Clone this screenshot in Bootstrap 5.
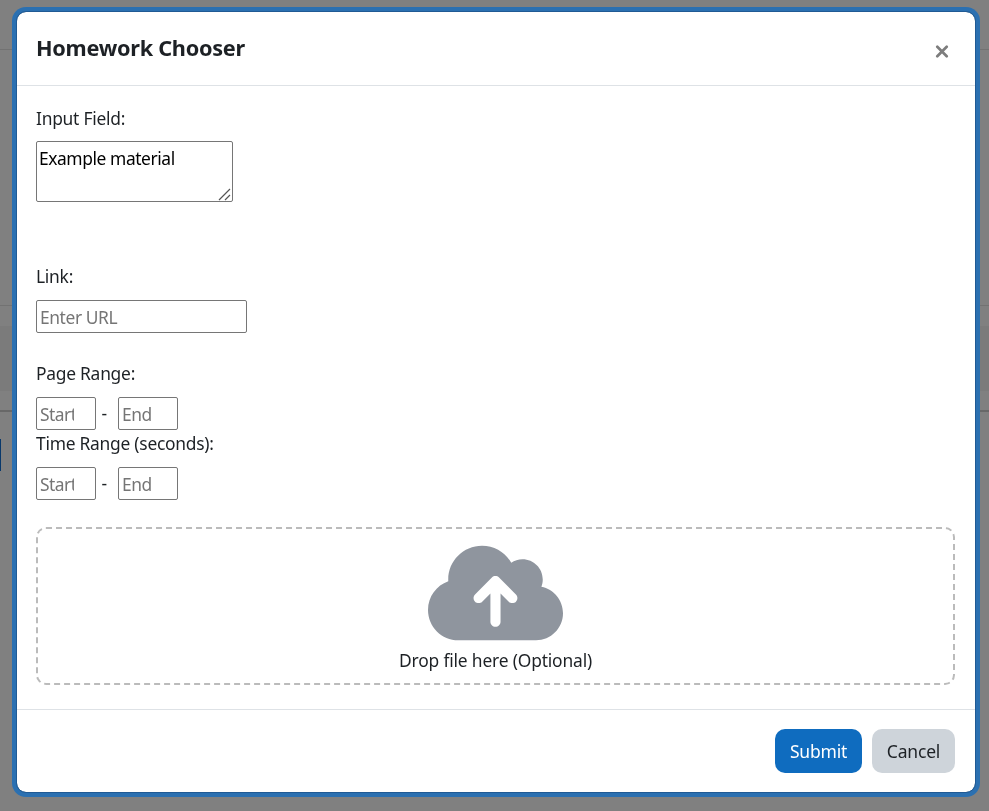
<!DOCTYPE html>
<html lang="en">
<head>
<meta charset="utf-8">
<meta name="viewport" content="width=device-width, initial-scale=1">
<title>Homework Chooser</title>
<link href="https://cdn.jsdelivr.net/npm/bootstrap@5.3.0/dist/css/bootstrap.min.css" rel="stylesheet">
<style>
  body { font-family: "Noto Sans", "Open Sans", sans-serif; font-size: 17.4px; line-height: 27px; color: #1d2125; background: #808080; height: 811px; overflow: hidden; letter-spacing: -.25px; }
  .page-behind { height: 811px; }
  .strip-top { height: 50px; border-bottom: 1px solid #727272; }
  .strip-main { height: 256px; border-bottom: 1px solid #727272; }
  .strip-gap { height: 20px; }
  .strip-band { height: 65px; background: #7b7b7b; }
  .strip-foot { height: 21px; border-bottom: 2px solid #686868; }
  .edge-button { width: 1px; height: 32px; margin-top: 27px; background: #08386b; }
  .chooser-dialog { max-width: 960px; width: 960px; margin: 11px 0 0 16px; }
  .chooser-box { height: 782px; border: 1px solid #205a94; border-radius: 10px; box-shadow: 0 0 0 4px #2b70b1; color: inherit; }
  .chooser-head { height: 74px; padding: 0 20px 0 19px; border-color: #dee2e6; }
  .chooser-title { font-size: 21.7px; font-weight: 700; line-height: 30px; letter-spacing: -.28px; padding-bottom: 2px; }
  .close-icon { width: 14px; height: 14px; margin: 5px 6px 0 0; }
  .chooser-body { padding: 20px 20px 0 19px; }
  .chooser-body label { display: block; height: 27px; white-space: nowrap; }
  .chooser-body label.first-label { line-height: 25px; }
  .plain { display: block; border: 1px solid #767676; border-radius: 2px; background: #fff; color: #000; outline: 0; letter-spacing: -.25px; }
  .plain::placeholder { color: #757575; opacity: 1; }
  .note-wrap { width: 197px; margin: 8px 0 61px; }
  .note { width: 197px; height: 61px; padding: 3px 2px; line-height: 27px; letter-spacing: -.42px; resize: none; overflow: hidden; }
  .grip { right: 2px; bottom: 1px; width: 13px; height: 13px; }
  .line-input { height: 33px; padding: 1px 3px; margin-top: 10px; }
  .url { width: 211px; margin-bottom: 27px; letter-spacing: -.4px; }
  .range { width: 60px; padding-right: 21px; letter-spacing: -.5px; }
  .dash { width: 22px; padding-left: 5.5px; margin-top: 10px; }
  .drop-zone { height: 158px; margin-top: 27px; border: 2px dashed #bbb; border-radius: 10px; padding-top: 9.5px; letter-spacing: -.17px; }
  .drop-zone svg { width: 135px; height: 108px; }
  .chooser-foot { height: 83px; padding: 0 20px 0 19px; gap: 10px; border-color: #dee2e6; }
  .chooser-foot > .btn { margin: 0; height: 44px; padding: 0; border: 0; border-radius: 10px; font-size: 17.5px; letter-spacing: -.2px; }
  .btn-send { width: 87px; background: #0f6cbf; color: #fff; }
  .btn-dismiss { width: 83px; background: #ced4da; color: #1d2125; }
</style>
<script src="https://cdn.jsdelivr.net/npm/bootstrap@5.3.0/dist/js/bootstrap.bundle.min.js"></script>
</head>
<body>
<div class="page-behind" aria-hidden="true">
  <div class="strip-top"></div><div class="strip-main"></div><div class="strip-gap"></div>
  <div class="strip-band"></div><div class="strip-foot"></div><div class="edge-button"></div>
</div>
<div class="modal d-block overflow-hidden" role="dialog" aria-labelledby="chooserTitle">
  <div class="modal-dialog chooser-dialog">
    <div class="modal-content chooser-box">
      <div class="modal-header chooser-head">
        <h5 class="modal-title chooser-title" id="chooserTitle">Homework Chooser</h5>
        <button type="button" class="btn p-0 border-0 d-flex" aria-label="Close">
          <svg class="close-icon" viewBox="0 0 14 14" fill="none" stroke="#7d7d7d" stroke-width="2.7" stroke-linecap="round"><path d="M2.300 2.800l9.400 9.400M11.700 2.800l-9.400 9.400"/></svg>
        </button>
      </div>
      <div class="modal-body chooser-body">
        <label class="first-label" for="note">Input Field:</label>
        <div class="note-wrap position-relative">
          <textarea class="plain note" id="note" spellcheck="false">Example material</textarea>
          <svg class="grip position-absolute" viewBox="0 0 13 13" fill="none" stroke="#555" stroke-width="1.2"><path d="M1 12L12 1M7 12L12 7"/></svg>
        </div>
        <label for="url">Link:</label>
        <input class="plain line-input url" id="url" type="text" placeholder="Enter URL">
        <label for="pageStart">Page Range:</label>
        <div class="d-flex align-items-center">
          <input class="plain line-input range" id="pageStart" type="text" placeholder="Start"><span class="dash">-</span><input class="plain line-input range" type="text" placeholder="End" aria-label="Last page">
        </div>
        <label for="timeStart">Time Range (seconds):</label>
        <div class="d-flex align-items-center">
          <input class="plain line-input range" id="timeStart" type="text" placeholder="Start"><span class="dash">-</span><input class="plain line-input range" type="text" placeholder="End" aria-label="End time">
        </div>
        <div class="drop-zone d-flex flex-column align-items-center">
          <svg viewBox="0 0 640 512" fill="#8f959e"><path d="M144 480C64.500 480 0 415.500 0 336c0-62.800 40.200-116.200 96.200-135.900c-.1-2.700-.2-5.400-.2-8.100c0-88.400 71.600-160 160-160c59.300 0 111 32.200 138.700 80.200C409.900 102 428.300 96 448 96c53 0 96 43 96 96c0 12.200-2.300 23.800-6.400 34.600C596 238.400 640 290.100 640 352c0 70.700-57.300 128-128 128H144zm79-217c-9.400 9.400-9.400 24.600 0 33.900s24.600 9.400 33.900 0l39-39V392c0 13.300 10.700 24 24 24s24-10.700 24-24V257.900l39 39c9.400 9.400 24.600 9.400 33.900 0s9.400-24.600 0-33.900l-80-80c-9.400-9.400-24.600-9.400-33.900 0l-80 80z"/></svg>
          <span>Drop file here (Optional)</span>
        </div>
      </div>
      <div class="modal-footer chooser-foot">
        <button type="button" class="btn btn-send">Submit</button>
        <button type="button" class="btn btn-dismiss">Cancel</button>
      </div>
    </div>
  </div>
</div>
</body>
</html>
